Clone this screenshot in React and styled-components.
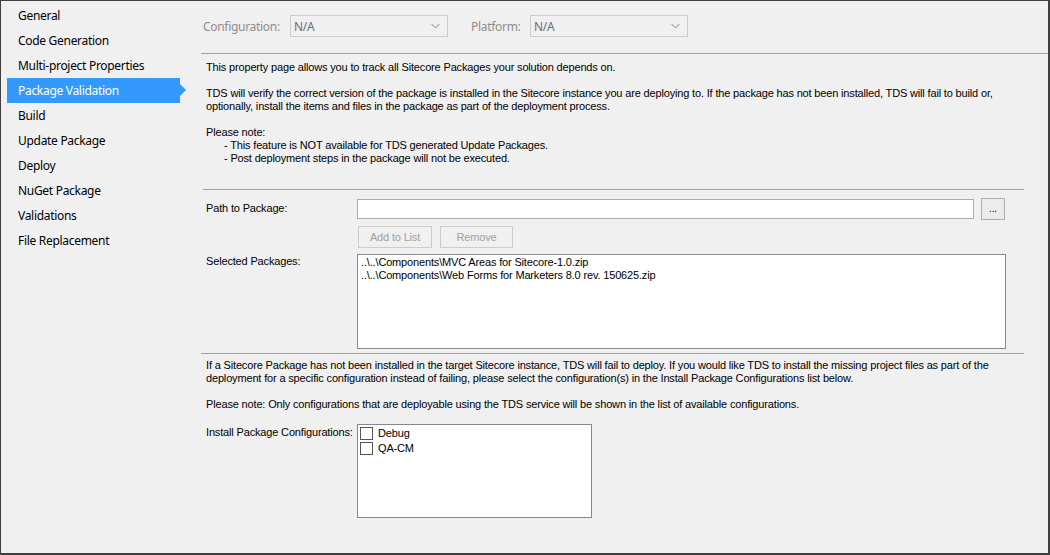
import React from "react";
import styled, { createGlobalStyle } from "styled-components";

const navItems = [
  "General",
  "Code Generation",
  "Multi-project Properties",
  "Package Validation",
  "Build",
  "Update Package",
  "Deploy",
  "NuGet Package",
  "Validations",
  "File Replacement",
];

const packages = [
  "..\\..\\Components\\MVC Areas for Sitecore-1.0.zip",
  "..\\..\\Components\\Web Forms for Marketers 8.0 rev. 150625.zip",
];

const configs = ["Debug", "QA-CM"];

const Chevron = () => (
  <svg width="9" height="6" viewBox="0 0 9 6" aria-hidden>
    <path d="M0.5 0.8 L4.5 4.8 L8.5 0.8" fill="none" stroke="#a6a6a6" strokeWidth="1.1" />
  </svg>
);

export default function App() {
  return (
    <>
      <GlobalStyle />
      <Frame>
        <Sidebar>
          {navItems.map((item) => (
            <NavItem key={item} $active={item === "Package Validation"}>
              {item}
            </NavItem>
          ))}
        </Sidebar>

        <Main>
          <Header>
            <HeaderLabel $w={87}>Configuration:</HeaderLabel>
            <Select>
              <span>N/A</span>
              <Chevron />
            </Select>
            <HeaderLabel $w={59} $gap={23}>Platform:</HeaderLabel>
            <Select>
              <span>N/A</span>
              <Chevron />
            </Select>
          </Header>

          <Intro>
            <Para>This property page allows you to track all Sitecore Packages your solution depends on.</Para>
            <Para>
              TDS will verify the correct version of the package is installed in the Sitecore instance you are deploying to. If the package has not been installed, TDS will fail to build or,
              <br />
              optionally, install the items and files in the package as part of the deployment process.
            </Para>
            <Para>
              Please note:
              <Indent>- This feature is NOT available for TDS generated Update Packages.</Indent>
              <Indent>- Post deployment steps in the package will not be executed.</Indent>
            </Para>
          </Intro>

          <Rule $left={2} $top={0} />

          <Form>
            <FieldLabel $pad={4}>Path to Package:</FieldLabel>
            <InputRow>
              <TextInput />
              <BrowseButton>...</BrowseButton>
            </InputRow>

            <span />
            <ButtonRow>
              <PushButton $w={74}>Add to List</PushButton>
              <PushButton $w={73}>Remove</PushButton>
            </ButtonRow>

            <FieldLabel $pad={1}>Selected Packages:</FieldLabel>
            <ListBox $w={649} $h={95}>
              {packages.map((p) => (
                <ListItem key={p}>{p}</ListItem>
              ))}
            </ListBox>
          </Form>

          <Rule $left={0} $top={4} />

          <Notes>
            <Para>
              If a Sitecore Package has not been installed in the target Sitecore instance, TDS will fail to deploy. If you would like TDS to install the missing project files as part of the
              <br />
              deployment for a specific configuration instead of failing, please select the configuration(s) in the Install Package Configurations list below.
            </Para>
            <Para>Please note: Only configurations that are deployable using the TDS service will be shown in the list of available configurations.</Para>
          </Notes>

          <ConfigRow>
            <FieldLabel $pad={2}>Install Package Configurations:</FieldLabel>
            <ListBox $w={235} $h={94} $padX={2}>
              {configs.map((c) => (
                <CheckRow key={c}>
                  <Box />
                  <span>{c}</span>
                </CheckRow>
              ))}
            </ListBox>
          </ConfigRow>
        </Main>
      </Frame>
    </>
  );
}

/* ===== styles ===== */
const GlobalStyle = createGlobalStyle`
  html, body { margin: 0; padding: 0; background: #f0f0f0; }
  * { box-sizing: border-box; }
`;

const Frame = styled.div`
  display: flex;
  width: 1050px;
  height: 555px;
  background: #f0f0f0;
  border-style: solid;
  border-color: #3f3f3f;
  border-width: 1px 2px 2px 1px;
  font-family: "Liberation Sans", Arial, sans-serif;
  font-size: 11px;
  letter-spacing: -0.16px;
  color: #000;
  overflow: hidden;
`;

const Sidebar = styled.nav`
  width: 200px;
  flex-shrink: 0;
  padding-top: 2px;
  display: flex;
  flex-direction: column;
  font-family: "Noto Sans", "Open Sans", sans-serif;
  font-size: 12px;
  letter-spacing: -0.3px;
`;

const NavItem = styled.div`
  position: relative;
  height: 25px;
  width: 173px;
  margin-left: 6px;
  padding-left: 11px;
  display: flex;
  align-items: center;
  color: ${(p) => (p.$active ? "#fff" : "#000")};
  background: ${(p) => (p.$active ? "#3399ff" : "transparent")};
  &::after {
    content: "";
    display: ${(p) => (p.$active ? "block" : "none")};
    position: absolute;
    right: -6px;
    top: 6px;
    border-left: 6px solid #3399ff;
    border-top: 6px solid transparent;
    border-bottom: 6px solid transparent;
  }
`;

const Main = styled.main`
  flex: 1;
  display: flex;
  flex-direction: column;
  min-width: 0;
`;

const Header = styled.div`
  height: 53px;
  flex-shrink: 0;
  display: flex;
  align-items: center;
  padding: 0 0 2px 2px;
  border-bottom: 1px solid #a0a0a0;
  font-family: "Noto Sans", "Open Sans", sans-serif;
  font-size: 12px;
  letter-spacing: -0.3px;
`;

const HeaderLabel = styled.span`
  width: ${(p) => p.$w}px;
  margin-left: ${(p) => p.$gap || 0}px;
  color: #8d8d8d;
`;

const Select = styled.div`
  width: 158px;
  height: 22px;
  display: flex;
  align-items: center;
  justify-content: space-between;
  padding: 0 7px 0 3px;
  border: 1px solid #cccccc;
  color: #6d6d6d;
`;

const Intro = styled.div`
  padding: 7px 0 0 5px;
  height: 135px;
  flex-shrink: 0;
`;

const Para = styled.div`
  line-height: 13px;
  margin-bottom: 13px;
  white-space: nowrap;
`;

const Indent = styled.div`
  padding-left: 18px;
`;

const Rule = styled.hr`
  margin: ${(p) => p.$top}px 24px 0 ${(p) => p.$left}px;
  border: 0;
  border-top: 1px solid #a0a0a0;
  height: 0;
  flex-shrink: 0;
`;

const Form = styled.div`
  display: grid;
  grid-template-columns: 151px auto;
  row-gap: 6px;
  padding: 8px 0 0 5px;
  align-items: start;
`;

const FieldLabel = styled.div`
  line-height: 13px;
  padding-top: ${(p) => (p.$pad !== undefined ? p.$pad : 3)}px;
  white-space: nowrap;
`;

const InputRow = styled.div`
  display: flex;
  align-items: center;
  gap: 7px;
`;

const TextInput = styled.div`
  width: 617px;
  height: 20px;
  background: #fff;
  border: 1px solid #abadb3;
`;

const BrowseButton = styled.div`
  width: 24px;
  height: 22px;
  display: flex;
  align-items: center;
  justify-content: center;
  padding-bottom: 2px;
  background: #ececec;
  border: 1px solid #adadad;
  font-size: 10px;
`;

const ButtonRow = styled.div`
  display: flex;
  gap: 8px;
  padding-left: 1px;
`;

const PushButton = styled.div`
  width: ${(p) => p.$w}px;
  height: 22px;
  display: flex;
  align-items: center;
  justify-content: center;
  border: 1px solid #cccccc;
  color: #a0a0a0;
`;

const ListBox = styled.div`
  width: ${(p) => p.$w}px;
  height: ${(p) => p.$h}px;
  background: #fff;
  border: 1px solid #828790;
  padding: 1px ${(p) => p.$padX || 3}px;
`;

const ListItem = styled.div`
  line-height: 13px;
  white-space: nowrap;
`;

const Notes = styled.div`
  padding: 5px 0 0 5px;
`;

const ConfigRow = styled.div`
  display: grid;
  grid-template-columns: 151px auto;
  padding-left: 5px;
  align-items: start;
`;

const CheckRow = styled.div`
  display: flex;
  align-items: center;
  gap: 5px;
  height: 15px;
  line-height: 13px;
`;

const Box = styled.span`
  width: 13px;
  height: 13px;
  border: 1px solid #555;
  background: #fff;
  flex-shrink: 0;
`;
